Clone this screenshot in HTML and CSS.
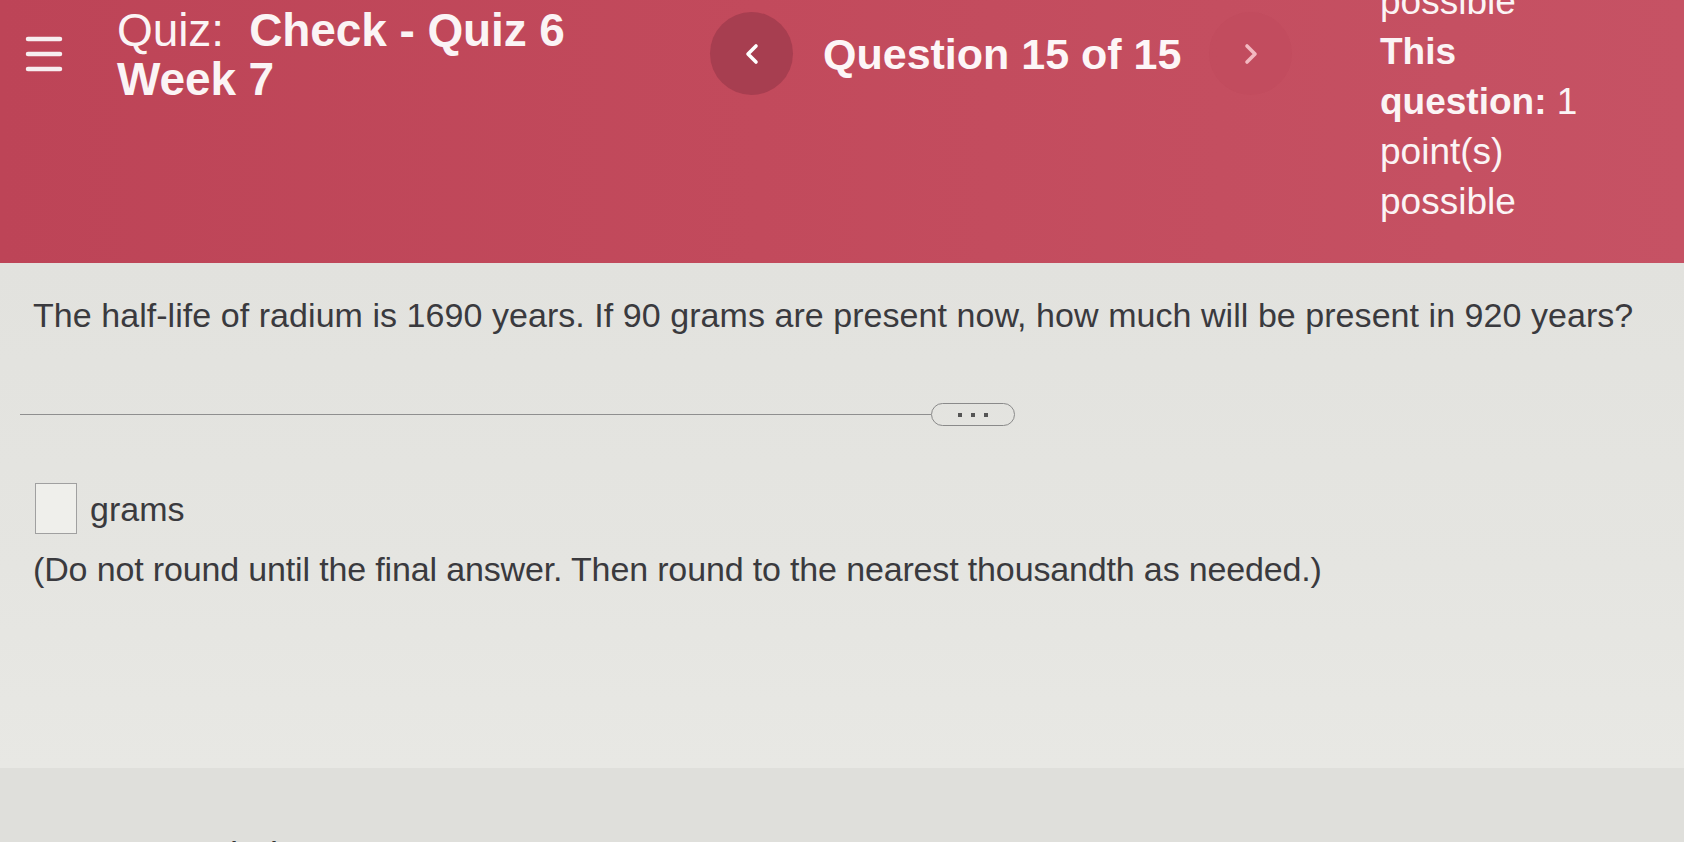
FILE: index.html
```html
<!DOCTYPE html>
<html lang="en">
<head>
<meta charset="utf-8">
<title>Quiz: Check - Quiz 6 Week 7</title>
<link rel="stylesheet" href="styles.css">
</head>
<body>
<header class="topbar">
  <button class="menu" aria-label="Menu">
    <svg width="38" height="40" viewBox="0 0 38 40"><g stroke="#f7eef0" stroke-width="4.5" stroke-linecap="round"><line x1="3" y1="5" x2="35" y2="5"/><line x1="3" y1="20" x2="35" y2="20"/><line x1="3" y1="35" x2="35" y2="35"/></g></svg>
  </button>
  <h1 class="title">Quiz:&nbsp; <b>Check - Quiz 6 Week 7</b></h1>
  <nav class="qnav">
    <span class="navbtn prev"><svg width="16" height="22" viewBox="0 0 16 22"><polyline points="12,3 4,11 12,19" fill="none" stroke="#fff" stroke-width="3.6" stroke-linecap="round" stroke-linejoin="round"/></svg></span>
    <span class="qnum">Question 15 of 15</span>
    <span class="navbtn next"><svg width="16" height="22" viewBox="0 0 16 22"><polyline points="4,3 12,11 4,19" fill="none" stroke="#f3b9c1" stroke-width="3.6" stroke-linecap="round" stroke-linejoin="round"/></svg></span>
  </nav>
  <div class="points">
    <div class="line">possible</div>
    <div class="line"><b>This</b></div>
    <div class="line"><b>question:</b> 1</div>
    <div class="line">point(s)</div>
    <div class="line">possible</div>
  </div>
</header>
<main class="content">
  <p class="question">The half-life of radium is 1690 years. If 90 grams are present now, how much will be present in 920 years?</p>
  <div class="divider">
    <span class="rule"></span>
    <span class="pill"><i></i><i></i><i></i></span>
    <span class="rule"></span>
  </div>
  <div class="answer">
    <span class="box"></span>
    <span class="unit">grams</span>
  </div>
  <p class="note">(Do not round until the final answer. Then round to the nearest thousandth as needed.)</p>
</main>
<section class="more">
  <h2 class="more-title">Get more help</h2>
</section>
</body>
</html>
```
FILE: styles.css
```css
* { box-sizing: border-box; }
html, body {
  margin: 0;
  padding: 0;
  height: 100%;
  overflow: hidden;
}
body {
  font-family: "Liberation Sans", Arial, sans-serif;
  background: #e2e2de;
  color: #3a3a3e;
}
.topbar {
  height: 263px;
  background: linear-gradient(90deg, #bd4457 0%, #c24a5c 45%, #c65264 100%);
  color: #fbf4f5;
  display: flex;
  align-items: flex-start;
  padding-left: 25px;
  overflow: hidden;
}
.menu {
  margin-top: 34px;
  padding: 0;
  border: 0;
  background: none;
  width: 38px;
  height: 40px;
  display: flex;
}
.title {
  margin: 6px 0 0 54px;
  width: 490px;
  font-size: 46px;
  line-height: 49px;
  font-weight: 400;
  letter-spacing: -0.1px;
}
.title b { font-weight: 700; }
.qnav {
  margin: 12px 0 0 103px;
  display: flex;
  align-items: center;
  gap: 30px;
}
.navbtn {
  width: 83px;
  height: 83px;
  border-radius: 50%;
  display: flex;
  align-items: center;
  justify-content: center;
}
.prev { background: #a73e50; }
.next { background: rgba(150, 30, 50, 0.05); }
.qnum {
  font-size: 43px;
  font-weight: 700;
  line-height: 48px;
  color: #fdf6f7;
  width: 356px;
  white-space: nowrap;
}
.points {
  margin: -23px 0 0 88px;
  font-size: 37px;
  line-height: 50px;
  width: 260px;
}
.points b { font-weight: 700; }
.content {
  padding: 32px 0 0 0;
  height: 505px;
  background: linear-gradient(180deg, #e2e2de 0%, #e5e5e1 60%, #e8e8e4 100%);
}
.question {
  margin: 0 0 68px 33px;
  font-size: 34px;
  line-height: 40px;
  white-space: nowrap;
  letter-spacing: 0.05px;
}
.divider {
  display: flex;
  align-items: center;
  padding-left: 20px;
  height: 23px;
}
.rule {
  flex: 1;
  height: 1.5px;
  background: #8f8f8f;
}
.pill {
  width: 84px;
  height: 23px;
  border: 1.5px solid #8a8a8a;
  border-radius: 12px;
  display: flex;
  align-items: center;
  justify-content: center;
  gap: 9px;
  flex: none;
  margin-right: 669px;
}
.pill + .rule { flex: none; }
.pill i {
  width: 4px;
  height: 4px;
  background: #555;
  display: block;
}
.answer {
  margin: 57px 0 0 35px;
  display: flex;
  align-items: flex-end;
  gap: 13px;
}
.box {
  width: 42px;
  height: 51px;
  border: 1.5px solid #a0a0a0;
  background: #efefeb;
}
.unit {
  font-size: 34px;
  line-height: 40px;
  margin-bottom: 5px;
}
.note {
  margin: 15px 0 0 33px;
  font-size: 34px;
  line-height: 40px;
  white-space: nowrap;
  letter-spacing: -0.15px;
}
.more {
  height: 80px;
  background: #dfdfdb;
  padding: 68px 0 0 70px;
}
.more-title {
  margin: 0;
  font-size: 36px;
  line-height: 40px;
  font-weight: 400;
  color: #333;
}
```
